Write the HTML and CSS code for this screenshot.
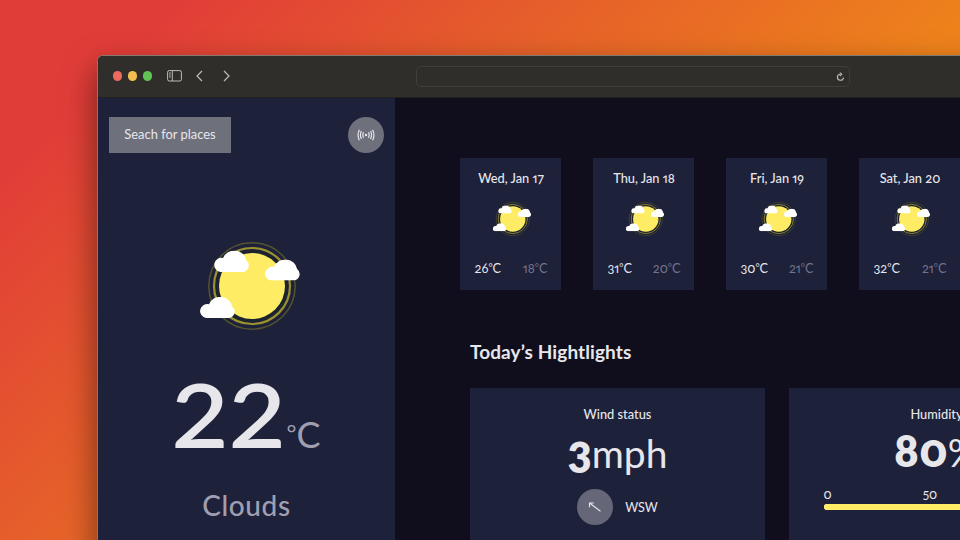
FILE: index.html
```
<!DOCTYPE html>
<html lang="en">
<head>
<meta charset="utf-8">
<title>Weather</title>
<link rel="stylesheet" href="styles.css">
</head>
<body>
<svg class="defs" aria-hidden="true">
  <symbol id="cloud" viewBox="1.2 0 34.2 21" preserveAspectRatio="none">
    <path d="M7 21A7 7 0 1 1 9.6 7.2A11.2 11.2 0 0 1 31.2 9.4A6.7 6.7 0 0 1 28.6 21Z" fill="#fff"/>
  </symbol>
  <symbol id="weather" viewBox="0 0 104 92">
    <circle cx="54" cy="46" r="38.5" fill="#1c2230"/>
    <circle cx="54" cy="46" r="43.2" fill="none" stroke="#54532f" stroke-width="1.5"/>
    <circle cx="54" cy="46" r="38" fill="none" stroke="#99922f" stroke-width="2.2"/>
    <circle cx="54" cy="46" r="33" fill="#ffec65"/>
    <use href="#cloud" x="16.1" y="10.7" width="36.6" height="21.3"/>
    <use href="#cloud" x="67" y="19.6" width="36.6" height="21"/>
    <use href="#cloud" x="2" y="57" width="36.6" height="21"/>
  </symbol>
</svg>
<div class="window">
  <header class="toolbar">
    <div class="lights"><i class="red"></i><i class="yellow"></i><i class="green"></i></div>
    <svg class="sidebar-icon" viewBox="0 0 15 12"><rect x=".6" y=".6" width="13.8" height="10.4" rx="1.6"/><path d="M5.3 .6V11M2 3h1.8M2 5h1.8M2 7h1.8"/></svg>
    <svg class="chevron back" viewBox="0 0 7 12"><path d="M6 1L1 6L6 11"/></svg>
    <svg class="chevron" viewBox="0 0 7 12"><path d="M1 1L6 6L1 11"/></svg>
    <div class="address"><svg class="reload" viewBox="0 0 9 10"><path d="M4.4 2.3A3 3 0 1 0 7.4 5.4"/><path d="M3.8 .6L5.8 2.3L3.8 4.2"/></svg></div>
  </header>
  <div class="app">
    <aside class="today">
      <div class="search">
        <button class="search-button"><span>Seach for places</span></button>
        <button class="locate"><svg viewBox="0 0 18 14"><circle cx="9" cy="7" r="1.2" class="dot"/><path d="M6.6 4.2Q5 7 6.6 9.8M4.4 3Q2.5 7 4.4 11M2.4 1.7Q-.3 7 2.4 12.3M11.4 4.2Q13 7 11.4 9.8M13.6 3Q15.5 7 13.6 11M15.6 1.7Q18.3 7 15.6 12.3"/></svg></button>
      </div>
      <svg class="hero"><use href="#weather"/></svg>
      <div class="temperature"><span class="value">22</span><span class="unit"><i>°</i>C</span></div>
      <div class="condition">Clouds</div>
    </aside>
    <main class="content">
      <section class="forecast">
        <article class="day"><h3>Wed, Jan 17</h3><svg class="mini"><use href="#weather"/></svg><p><span>26<i>°</i>C</span><span class="low">18<i>°</i>C</span></p></article>
        <article class="day"><h3>Thu, Jan 18</h3><svg class="mini"><use href="#weather"/></svg><p><span>31<i>°</i>C</span><span class="low">20<i>°</i>C</span></p></article>
        <article class="day"><h3>Fri, Jan 19</h3><svg class="mini"><use href="#weather"/></svg><p><span>30<i>°</i>C</span><span class="low">21<i>°</i>C</span></p></article>
        <article class="day"><h3>Sat, Jan 20</h3><svg class="mini"><use href="#weather"/></svg><p><span>32<i>°</i>C</span><span class="low">21<i>°</i>C</span></p></article>
      </section>
      <h2 class="title">Today’s Hightlights</h2>
      <section class="highlights">
        <article class="card">
          <h3>Wind status</h3>
          <div class="reading"><b>3</b><span>mph</span></div>
          <div class="direction"><span class="compass"><svg viewBox="0 0 14 12"><path d="M12.5 10.3L1.5 2M1.5 6.2V2H5.8"/></svg></span><span class="bearing">WSW</span></div>
        </article>
        <article class="card">
          <h3>Humidity</h3>
          <div class="reading humidity"><b>80</b><span>%</span></div>
          <div class="scale"><span>0</span><span>50</span><span>100</span></div>
          <div class="bar"><div class="fill" style="width:80%"></div></div>
        </article>
      </section>
    </main>
  </div>
</div>
</body>
</html>
```
FILE: styles.css
```
* { box-sizing: border-box; margin: 0; padding: 0; }
html { overflow: hidden; }
body {
  width: 960px;
  height: 540px;
  overflow: hidden;
  padding: 55px 0 0 97px;
  background: linear-gradient(135deg, #e13d38 12%, #e6602a 38%, #ee821b 66%);
  font-family: Lato, sans-serif;
  font-feature-settings: "onum" 1, "pnum" 1;
  color: #e7e7eb;
}
i { font-style: normal; }
.defs { position: absolute; width: 0; height: 0; }
.window {
  width: 1140px;
  height: 700px;
  border: 1px solid #857a70;
  border-right: 0;
  border-radius: 6px;
  overflow: hidden;
  background: #100e1d;
  box-shadow: 0 14px 32px rgba(0, 0, 0, .5);
}
.toolbar {
  display: flex;
  align-items: center;
  height: 42px;
  padding: 0 0 1px 15px;
  background: #2f2e2b;
  border-bottom: 1px solid #21201f;
}
.toolbar svg { fill: none; stroke: #bdbcb9; }
.lights { display: flex; gap: 5.6px; }
.lights i { width: 9.4px; height: 9.4px; border-radius: 50%; }
.red { background: #ed6a5f; }
.yellow { background: #f5bf50; }
.green { background: #61c554; }
.sidebar-icon { width: 15px; height: 12px; margin-left: 15px; stroke-width: 1; }
.chevron { width: 7px; height: 12px; margin-left: 20px; stroke-width: 1.2; }
.chevron.back { margin-left: 14px; }
.address {
  display: flex;
  align-items: center;
  justify-content: flex-end;
  width: 434px;
  height: 21px;
  margin: 1px 0 0 186px;
  padding-right: 4px;
  border: 1px solid #403f3c;
  border-radius: 5px;
}
.reload { width: 9px; height: 10px; stroke-width: 1.1; }
.app { display: flex; height: 640px; }
.today {
  display: flex;
  flex-direction: column;
  align-items: center;
  width: 297px;
  background: #1e213a;
}
.search {
  display: flex;
  justify-content: space-between;
  width: 100%;
  padding: 19px 11.5px 0 11px;
}
.search button { border: 0; background: #6e707c; color: #e7e7eb; font-family: inherit; }
.search .search-button { width: 122px; height: 36px; padding-bottom: 2px; font-size: 12.9px; }
.search .locate { display: grid; place-items: center; width: 36px; height: 36px; border-radius: 50%; }
.locate svg { width: 18px; height: 14px; fill: none; stroke: #e7e7eb; stroke-width: 1.2; }
.locate .dot { fill: #e7e7eb; stroke: none; }
.hero { width: 104px; height: 92px; margin: 87px 0 0 7px; }
.temperature { display: flex; align-items: baseline; height: 100px; margin: 32px 0 0 5px; line-height: 100px; }
.value { margin-right: 6px; font-size: 89px; font-feature-settings: "lnum" 1; font-weight: 600; transform: scaleX(1.11); }
.unit { font-size: 36px; color: #a09fb1; }
.unit i { font-size: 24px; vertical-align: 6px; line-height: 0; }
.condition { margin-top: 23px; line-height: 36px; font-size: 28px; font-weight: 500; letter-spacing: .6px; color: #a09fb1; }
.content { flex: 1; padding: 60px 0 0 65px; }
.forecast { display: grid; grid-template-columns: repeat(4, 101px); gap: 32px; }
.day { height: 132px; padding: 11px 13.5px 0 14.5px; background: #1e213a; display: flex; flex-direction: column; align-items: center; }
.day h3 { font-size: 12.8px; line-height: 18px; font-weight: 500; white-space: nowrap; }
.mini { width: 40px; height: 36px; margin: 14px 0 0 1px; }
.day p { display: flex; justify-content: space-between; width: 100%; margin-top: 22px; line-height: 18px; font-size: 12.8px; }
.day p i { font-size: 10px; vertical-align: 2px; line-height: 0; }
.low { color: #73748a; }
.title { margin: 50px 0 0 10px; line-height: 24px; font-size: 19px; letter-spacing: .1px; font-weight: 700; }
.highlights { display: grid; grid-template-columns: repeat(2, 295px); gap: 24px; margin: 24px 0 0 10px; }
.card { display: flex; flex-direction: column; align-items: center; height: 180px; padding-top: 17px; background: #1e213a; }
.card h3 { line-height: 18px; font-size: 12.8px; font-weight: 500; }
.reading { display: flex; align-items: baseline; height: 48px; line-height: 48px; margin-top: 4px; font-size: 39px; }
.reading b { font-size: 45px; font-weight: 800; }
.humidity { margin: 3px 0 1px; }
.direction { display: flex; align-items: center; gap: 12px; margin-top: 14px; font-size: 12.5px; }
.compass { display: grid; place-items: center; width: 36px; height: 36px; border-radius: 50%; background: #656779; }
.compass svg { width: 14px; height: 12px; fill: none; stroke: #e7e7eb; stroke-width: 1.1; }
.scale { display: flex; justify-content: space-between; width: 226px; margin-top: 11px; line-height: 16px; font-size: 12.8px; }
.bar { width: 226px; height: 6px; margin-top: 2px; border-radius: 4px; background: #e7e7eb; }
.fill { height: 6px; border-radius: 4px; background: #ffec65; }
```
